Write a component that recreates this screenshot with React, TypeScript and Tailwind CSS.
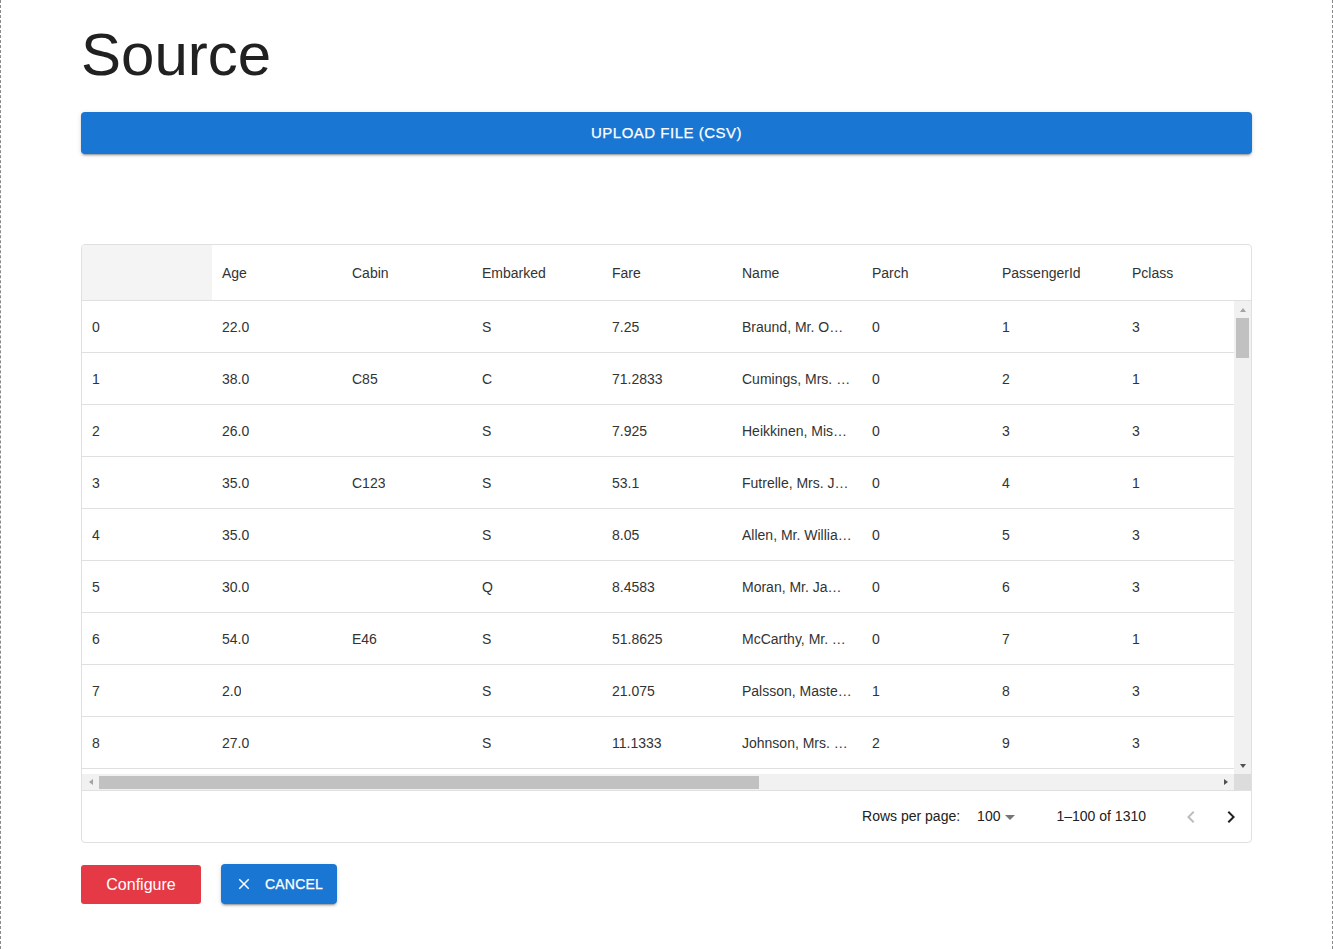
const columns = ["Age", "Cabin", "Embarked", "Fare", "Name", "Parch", "PassengerId", "Pclass", "Sex", "SibSp"];

const rows = [
  ["0", "22.0", "", "S", "7.25", "Braund, Mr. Owen Harris", "0", "1", "3", "male", "1"],
  ["1", "38.0", "C85", "C", "71.2833", "Cumings, Mrs. John Bradley", "0", "2", "1", "female", "1"],
  ["2", "26.0", "", "S", "7.925", "Heikkinen, Miss. Laina", "0", "3", "3", "female", "0"],
  ["3", "35.0", "C123", "S", "53.1", "Futrelle, Mrs. Jacques Heath", "0", "4", "1", "female", "1"],
  ["4", "35.0", "", "S", "8.05", "Allen, Mr. William Henry", "0", "5", "3", "male", "0"],
  ["5", "30.0", "", "Q", "8.4583", "Moran, Mr. James", "0", "6", "3", "male", "0"],
  ["6", "54.0", "E46", "S", "51.8625", "McCarthy, Mr. Timothy J", "0", "7", "1", "male", "0"],
  ["7", "2.0", "", "S", "21.075", "Palsson, Master. Gosta Leonard", "1", "8", "3", "male", "3"],
  ["8", "27.0", "", "S", "11.1333", "Johnson, Mrs. Oscar W", "2", "9", "3", "female", "0"],
  ["9", "14.0", "", "C", "30.0708", "Nasser, Mrs. Nicholas", "0", "10", "2", "female", "1"],
];

function Arrow({ dir }: { dir: "up" | "down" | "left" | "right" }) {
  const pts = {
    up: "1,6 4,2 7,6",
    down: "1,2 4,6 7,2",
    left: "6,1 2,4 6,7",
    right: "2,1 6,4 2,7",
  }[dir];
  return (
    <svg width="8" height="8" viewBox="0 0 8 8">
      <polygon points={pts} fill={dir === "right" || dir === "down" ? "#505050" : "#a3a3a3"} />
    </svg>
  );
}

export default function App() {
  return (
    <div className="min-h-[949px] border-x border-dashed border-[#8a8a8a] bg-white font-['Liberation_Sans',Arial,sans-serif] text-[#212121]">
      <div className="px-[80px] pt-[19px] pb-[40px]">
        <h1 className="text-[60px] leading-[72px] font-normal text-[#212121] mb-[21px]">Source</h1>

        <button className="w-full h-[42px] rounded-[4px] bg-[#1976d2] text-white text-[15px] tracking-[0.5px] [-webkit-text-stroke:0.25px_#fff] uppercase shadow-[0_3px_1px_-2px_rgba(0,0,0,0.2),0_2px_2px_0_rgba(0,0,0,0.14),0_1px_5px_0_rgba(0,0,0,0.12)]">
          Upload file (csv)
        </button>

        <div className="mt-[90px] border border-[#e0e0e0] rounded-[4px] overflow-hidden text-[14px] text-[#333]">
          {/* Header */}
          <div className="flex h-[56px] border-b border-[#e0e0e0] overflow-hidden">
            <div className="w-[130px] shrink-0 bg-[#f4f4f4]" />
            {columns.map((c) => (
              <div key={c} className="w-[130px] shrink-0 px-[10px] pt-[2px] flex items-center">
                {c}
              </div>
            ))}
          </div>

          {/* Body */}
          <div className="flex h-[473px]">
            <div className="flex-1 overflow-hidden">
              {rows.map((r) => (
                <div key={r[0]} className="flex h-[52px] border-b border-[#e0e0e0]">
                  {r.map((v, i) => (
                    <div key={i} className="w-[130px] shrink-0 px-[10px] pt-[2px] flex items-center">
                      <span className="truncate">{v}</span>
                    </div>
                  ))}
                </div>
              ))}
            </div>
            <div className="w-[17px] shrink-0 bg-[#f1f1f1] flex flex-col">
              <div className="h-[17px] flex items-center justify-center">
                <Arrow dir="up" />
              </div>
              <div className="mx-[2px] h-[40px] bg-[#c1c1c1]" />
              <div className="flex-1" />
              <div className="h-[17px] flex items-center justify-center">
                <Arrow dir="down" />
              </div>
            </div>
          </div>

          {/* Horizontal scrollbar */}
          <div className="flex h-[17px] border-b border-[#e0e0e0]">
            <div className="flex-1 flex bg-[#f1f1f1]">
              <div className="w-[17px] flex items-center justify-center">
                <Arrow dir="left" />
              </div>
              <div className="flex-1 flex items-center">
                <div className="w-[660px] h-[13px] bg-[#c1c1c1]" />
              </div>
              <div className="w-[17px] flex items-center justify-center">
                <Arrow dir="right" />
              </div>
            </div>
            <div className="w-[17px] bg-[#dcdcdc]" />
          </div>

          {/* Footer */}
          <div className="h-[51px] flex items-center justify-end text-[14px] text-[#212121]">
            <span>Rows per page:</span>
            <div className="ml-[17px] flex items-center">
              <span>100</span>
              <svg width="24" height="24" viewBox="0 0 24 24" className="-ml-[2px]">
                <path d="M7 10l5 5 5-5z" fill="#757575" />
              </svg>
            </div>
            <span className="ml-[34px]">1–100 of 1310</span>
            <div className="ml-[33px] mr-[8px] flex items-center gap-[16px]">
              <svg width="24" height="24" viewBox="0 0 24 24">
                <path d="M15.41 16.59 10.83 12l4.58-4.59L14 6l-6 6 6 6 1.41-1.41z" fill="#bdbdbd" />
              </svg>
              <svg width="24" height="24" viewBox="0 0 24 24">
                <path d="M8.59 16.59 13.17 12 8.59 7.41 10 6l6 6-6 6-1.41-1.41z" fill="#212121" />
              </svg>
            </div>
          </div>
        </div>

        <div className="mt-[21px] flex items-center gap-[20px]">
          <button className="mt-[1px] w-[120px] h-[39px] rounded-[3px] bg-[#e63946] text-white text-[16px]">
            Configure
          </button>
          <button className="w-[116px] h-[40px] rounded-[4px] bg-[#1976d2] text-white text-[14px] tracking-[0.2px] [-webkit-text-stroke:0.25px_#fff] flex items-center justify-center gap-[12px] shadow-[0_3px_1px_-2px_rgba(0,0,0,0.2),0_2px_2px_0_rgba(0,0,0,0.14),0_1px_5px_0_rgba(0,0,0,0.12)]">
            <svg width="18" height="18" viewBox="0 0 24 24">
              <path d="M19 6.41 17.59 5 12 10.59 6.41 5 5 6.41 10.59 12 5 17.59 6.41 19 12 13.41 17.59 19 19 17.59 13.41 12z" fill="#fff" />
            </svg>
            CANCEL
          </button>
        </div>
      </div>
    </div>
  );
}
